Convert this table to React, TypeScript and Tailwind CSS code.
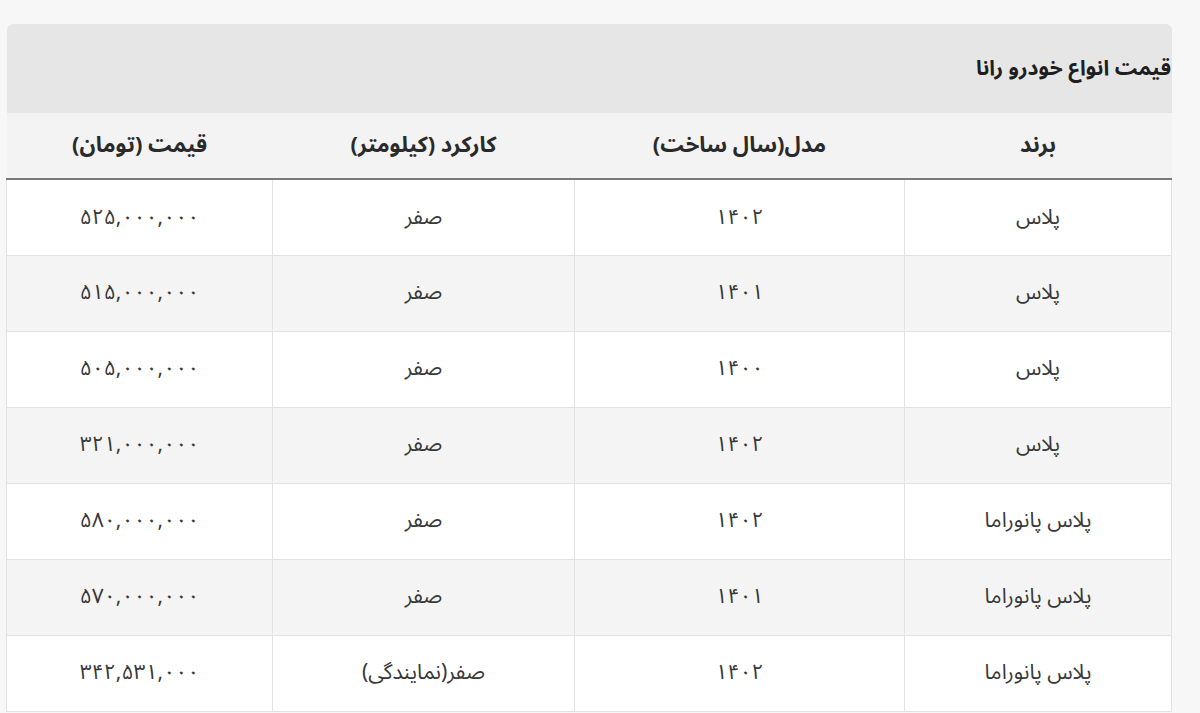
const rows = [
  { brand: "پلاس", model: "۱۴۰۲", usage: "صفر", price: "۵۲۵,۰۰۰,۰۰۰" },
  { brand: "پلاس", model: "۱۴۰۱", usage: "صفر", price: "۵۱۵,۰۰۰,۰۰۰" },
  { brand: "پلاس", model: "۱۴۰۰", usage: "صفر", price: "۵۰۵,۰۰۰,۰۰۰" },
  { brand: "پلاس", model: "۱۴۰۲", usage: "صفر", price: "۳۲۱,۰۰۰,۰۰۰" },
  { brand: "پلاس پانوراما", model: "۱۴۰۲", usage: "صفر", price: "۵۸۰,۰۰۰,۰۰۰" },
  { brand: "پلاس پانوراما", model: "۱۴۰۱", usage: "صفر", price: "۵۷۰,۰۰۰,۰۰۰" },
  { brand: "پلاس پانوراما", model: "۱۴۰۲", usage: "صفر(نمایندگی)", price: "۳۴۲,۵۳۱,۰۰۰" },
];

const heads = ["برند", "مدل(سال ساخت)", "کارکرد (کیلومتر)", "قیمت (تومان)"];

export default function App() {
  return (
    <div
      className="min-h-screen bg-[#f7f7f7] pt-[24px] pl-[7px]"
      style={{ fontFamily: '"Noto Sans Arabic", "DejaVu Sans", sans-serif' }}
    >
      <div dir="rtl" className="w-[1165px]">
        <div className="flex h-[89px] items-center rounded-t-[6px] bg-[#e6e6e6] pr-[1px] text-[21px] font-bold text-[#1e1e1e]">
          قیمت انواع خودرو رانا
        </div>
        <table className="w-full table-fixed border-collapse">
          <colgroup>
            <col className="w-[267px]" />
            <col className="w-[330px]" />
            <col className="w-[302px]" />
            <col className="w-[266px]" />
          </colgroup>
          <thead>
            <tr className="h-[66px] border-b-2 border-[#7a7a7a] bg-[#f3f3f3]">
              {heads.map((h) => (
                <th key={h} className="text-center text-[22px] font-bold text-[#2a2a2a]">
                  {h}
                </th>
              ))}
            </tr>
          </thead>
          <tbody>
            {rows.map((r, i) => (
              <tr
                key={i}
                className={`h-[76px] ${i % 2 === 1 ? "bg-[#f4f4f4]" : "bg-white"}`}
              >
                {[r.brand, r.model, r.usage, r.price].map((c, j) => (
                  <td
                    key={j}
                    className="border border-[#e2e2e2] text-center text-[21px] text-[#383838]"
                  >
                    {c}
                  </td>
                ))}
              </tr>
            ))}
          </tbody>
        </table>
      </div>
    </div>
  );
}
